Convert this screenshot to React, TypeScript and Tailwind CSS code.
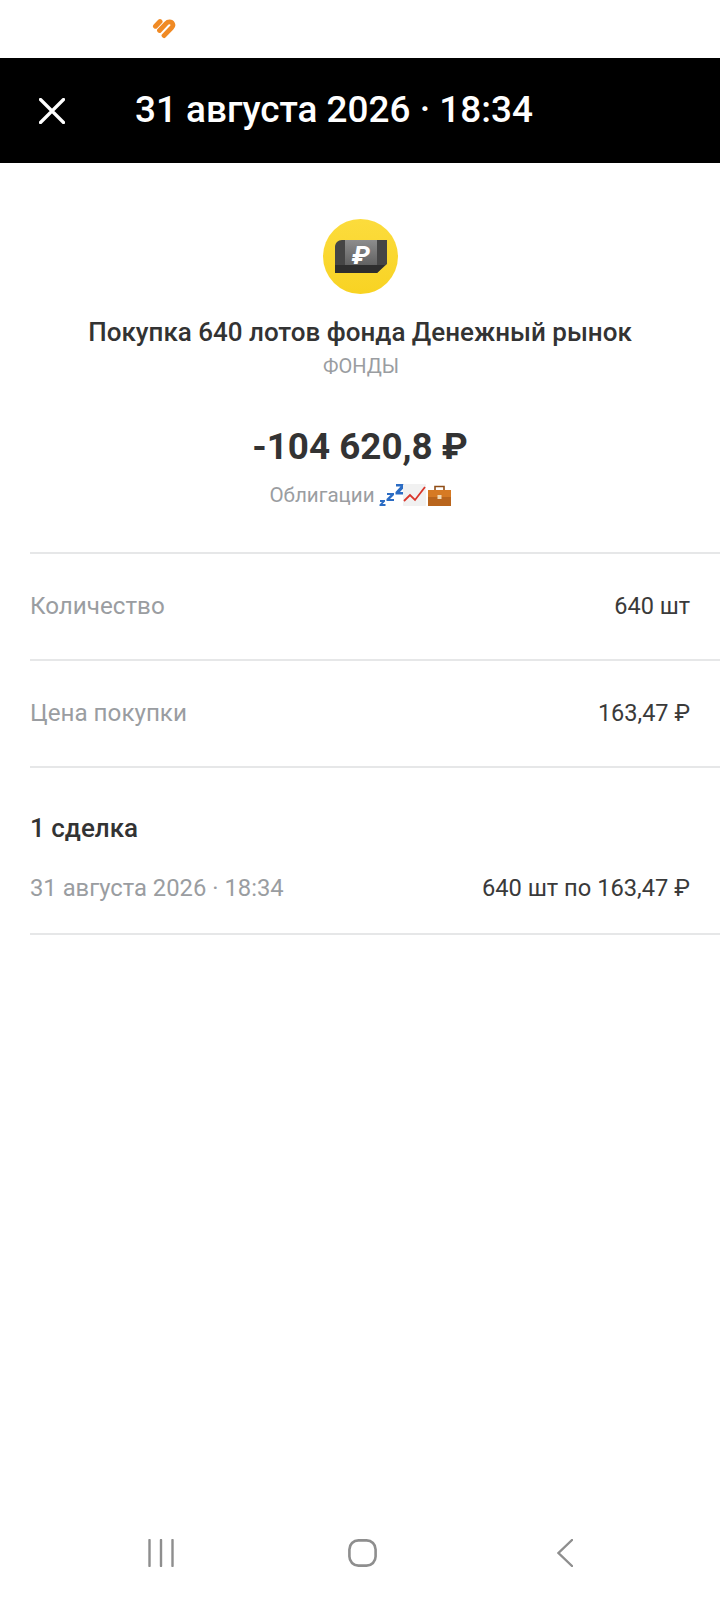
import React from "react";

function Heart() {
  return (
    <svg width="24" height="22" viewBox="0 0 24 22" fill="none">
      <path d="M3.5 8.2 L8 3.6" stroke="#f08a24" strokeWidth="5" strokeLinecap="round" />
      <path d="M7.5 12.5 L14 5.6 C16 3.4 19.4 3.4 20.6 5.8 C21.3 7.2 20.8 8.6 19.6 9.8 L12 17.6" stroke="#f08a24" strokeWidth="4.8" strokeLinecap="round" />
    </svg>
  );
}

function FundIcon() {
  return (
    <div className="flex h-[75px] w-[75px] items-center justify-center rounded-full bg-linear-to-b from-[#fcdc3c] to-[#f8d322] pl-[2px]">
      <svg width="52" height="34" viewBox="0 0 52 34">
        <defs>
          <linearGradient id="panel" x1="0" y1="0" x2="0" y2="1">
            <stop offset="0" stopColor="#8d8d8d" />
            <stop offset="1" stopColor="#626262" />
          </linearGradient>
        </defs>
        <path d="M7 0 H52 V24 L42 33 H0 V7 C0 3 3 0 7 0 Z" fill="#454545" />
        <path d="M0 25 H50 L42 33 H0 Z" fill="#2e2e2e" />
        <rect x="10" y="0" width="32" height="25" fill="url(#panel)" />
        <text x="26" y="24.2" textAnchor="middle" fontFamily="Roboto, sans-serif" fontWeight="700" fontStyle="italic" fontSize="26" fill="#fff">₽</text>
      </svg>
    </div>
  );
}

function Emojis() {
  return (
    <svg width="72" height="26" viewBox="0 0 72 26" className="ml-[4px]">
      <path d="M1 18 H6 V19.5 L3.5 22 H6.5 V24 H0.5 V22.5 L3 20 H1 Z" fill="#2b6cc4" />
      <path d="M8 11 H15 V13 L11 17 H15 V19 H7.5 V17 L11.5 13 H8 Z" fill="#2b6cc4" />
      <path d="M17 2 H26 V4.5 L21 10 H26 V12.5 H16.5 V10 L21.5 4.5 H17 Z" fill="#2b6cc4" />
      <rect x="24" y="2" width="23" height="22" rx="1" fill="#f1f1f1" />
      <path d="M25 19 L31 13 L36 18 L46 5" fill="none" stroke="#d9352b" strokeWidth="1.8" />
      <path d="M49 8 H72 V24 H49 Z" fill="#b9651d" />
      <path d="M49 8 H72 V15 H49 Z" fill="#d67a24" />
      <path d="M56 8 V4.5 H65 V8" fill="none" stroke="#8f4d16" strokeWidth="1.6" />
      <rect x="58.5" y="13" width="4" height="4" fill="#f0d9b5" />
    </svg>
  );
}

function Row({ label, value }: { label: string; value: string }) {
  return (
    <div className="flex h-[107px] items-center justify-between border-b-2 border-[#e6e7e8] pr-[30px]">
      <span className="text-[24.2px] text-[#9a9da1]">{label}</span>
      <span className="text-[23.5px] text-[#3a3a3a]">{value}</span>
    </div>
  );
}

export default function App() {
  return (
    <div className="flex h-[1600px] w-[720px] flex-col overflow-hidden bg-white font-['Roboto',sans-serif]">
      <div className="flex h-[58px] items-start pl-[152px] pt-[18px]">
        <Heart />
      </div>
      <div className="flex h-[105px] items-center bg-black pl-[39px]">
        <svg width="26" height="26" viewBox="0 0 26 26" className="mr-[70px]">
          <path d="M1.5 1.5 L24.5 24.5 M24.5 1.5 L1.5 24.5" stroke="#fff" strokeWidth="3.2" strokeLinecap="round" />
        </svg>
        <span className="text-[36.9px] font-medium leading-none text-white">31 августа 2026 · 18:34</span>
      </div>

      <div className="flex flex-col items-center pt-[56px]">
        <FundIcon />
        <div className="mt-[21px] text-[26px] font-medium leading-[34px] text-[#333333]">
          Покупка 640 лотов фонда Денежный рынок
        </div>
        <div className="mt-[4px] pl-[2px] text-[20px] leading-[26px] text-[#9a9da1]">ФОНДЫ</div>
        <div className="mt-[45px] text-[36.8px] font-bold leading-[46px] text-[#333333]">-104 620,8 ₽</div>
        <div className="mt-[12px] flex h-[26px] items-center text-[20.6px] text-[#9a9da1]">
          Облигации
          <Emojis />
        </div>
      </div>

      <div className="ml-[30px] mt-[44px] border-t-2 border-[#e6e7e8]">
        <Row label="Количество" value="640 шт" />
        <Row label="Цена покупки" value="163,47 ₽" />
        <div className="flex h-[167px] flex-col border-b-2 border-[#e6e7e8] pr-[30px] pt-[45px]">
          <div className="text-[26px] font-medium leading-[30px] text-[#333333]">1 сделка</div>
          <div className="mt-[31px] flex items-center justify-between leading-[28px]">
            <span className="text-[23.8px] text-[#9a9da1]">31 августа 2026 · 18:34</span>
            <span className="text-[23.7px] text-[#3a3a3a]">640 шт по 163,47 ₽</span>
          </div>
        </div>
      </div>

      <div className="mt-auto flex h-[61px] items-start justify-between pl-[148px] pr-[147px]">
        <svg width="26" height="28" viewBox="0 0 26 28">
          <path d="M1.5 1 V27 M13 1 V27 M24.5 1 V27" stroke="#8e8e8e" strokeWidth="2.4" strokeLinecap="round" />
        </svg>
        <svg width="29" height="28" viewBox="0 0 29 28" className="mr-[6px]">
          <rect x="1.4" y="1.4" width="26.2" height="25.2" rx="9" fill="none" stroke="#8e8e8e" strokeWidth="2.6" />
        </svg>
        <svg width="16" height="28" viewBox="0 0 16 28">
          <path d="M15 1 L1.5 14 L15 27" fill="none" stroke="#8e8e8e" strokeWidth="2.4" strokeLinecap="round" />
        </svg>
      </div>
    </div>
  );
}
